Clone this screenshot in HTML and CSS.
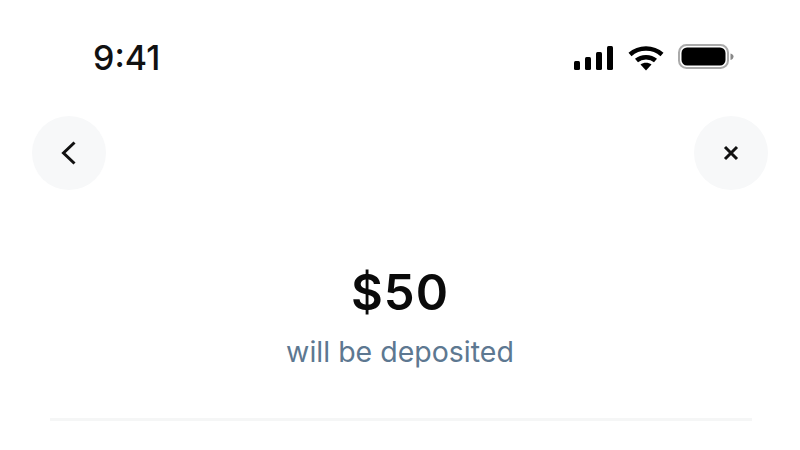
FILE: index.html
```html
<!DOCTYPE html>
<html lang="en">

<head>
  <meta charset="UTF-8">
  <meta name="viewport" content="width=device-width, initial-scale=1.0">
  <title>Deposit</title>

  <link rel="stylesheet" href="styles.css">
</head>

<body>
  <main class="screen">
    <header class="status-bar">
      <span class="time">9:41</span>
      <div class="status-icons">
        <svg class="signal" width="40" height="26" viewBox="0 0 40 26">
          <rect x="0" y="16" width="6" height="9" rx="1.5" />
          <rect x="11" y="12" width="6" height="13" rx="1.5" />
          <rect x="22" y="7" width="6" height="18" rx="1.5" />
          <rect x="33" y="1" width="6" height="24" rx="1.5" />
        </svg>
        <svg class="wifi" width="36" height="26" viewBox="0 0 36 26">
          <path d="M2 9.5C11 1.5 25 1.5 34 9.5" />
          <path d="M8.5 15.5C13.5 11 22.5 11 27.5 15.5" />
          <path class="wifi-dot" d="M12.5 19.5C15.5 17 20.5 17 23.5 19.5L18 25.5Z" />
        </svg>
        <svg class="battery" width="56" height="28" viewBox="0 0 56 28">
          <rect class="battery-case" x="1" y="1" width="49" height="23" rx="7.5" />
          <rect x="3.5" y="3.5" width="44" height="18" rx="5.5" />
          <path class="battery-cap" d="M52.5 9.5C54.5 10 55.5 11 55.5 12.5C55.5 14 54.5 15.500 52.5 16Z" />
        </svg>
      </div>
    </header>

    <nav class="nav-row">
      <button class="round-btn" aria-label="Back">
        <svg width="18" height="26" viewBox="0 0 18 26">
          <path d="M14.5 2.5L3.5 13L14.5 23.5" />
        </svg>
      </button>
      <button class="round-btn" aria-label="Close">
        <svg width="16" height="16" viewBox="0 0 16 16">
          <path d="M2 2L14 14M14 2L2 14" />
        </svg>
      </button>
    </nav>

    <section class="summary">
      <h1 class="amount">$50</h1>
      <p class="caption">will be deposited</p>
    </section>

    <hr class="divider">
  </main>
</body>

</html>
```

FILE: styles.css
```css
html,
body {
  background: #fff;
  height: 450px;
  margin: 0;
  overflow: hidden;
}

.screen {
  display: flex;
  flex-direction: column;
  font-family: Inter, "Liberation Sans", sans-serif;
  height: 450px;
  width: 800px;
}

.status-bar {
  align-items: center;
  display: flex;
  height: 36px;
  justify-content: space-between;
  margin-top: 40px;
  padding: 0 66px 0 93px;
}

.time {
  color: #111;
  font-size: 34px;
  font-weight: 500;
  line-height: 36px;
}

.status-icons {
  align-items: center;
  display: flex;
  gap: 14px;
}

.signal rect,
.battery rect,
.wifi-dot {
  fill: #000;
}

.wifi path {
  fill: none;
  stroke: #000;
  stroke-width: 4.5;
}

.wifi .wifi-dot {
  fill: #000;
  stroke: none;
}

.battery .battery-case {
  fill: none;
  stroke: #aaa;
  stroke-width: 2;
}

.battery-cap {
  fill: #888;
}

.nav-row {
  display: flex;
  justify-content: space-between;
  margin-top: 40px;
  padding: 0 32px;
}

.round-btn {
  align-items: center;
  background: #f7f8f9;
  border: 0;
  border-radius: 50%;
  display: flex;
  height: 74px;
  justify-content: center;
  padding: 0;
  width: 74px;
}

.round-btn svg path {
  fill: none;
  stroke: #111;
  stroke-width: 3;
}

.summary {
  margin-top: 74px;
  text-align: center;
}

.amount {
  color: #0a0a0a;
  font-size: 49px;
  font-weight: 600;
  letter-spacing: 1px;
  line-height: 58px;
  margin: 0;
}

.caption {
  color: #5d7891;
  font-size: 28.5px;
  line-height: 34px;
  margin: 13px 0 0;
}

.divider {
  background: #f5f6f6;
  border: 0;
  height: 3px;
  margin: 49px 48px 0 50px;
}
```
